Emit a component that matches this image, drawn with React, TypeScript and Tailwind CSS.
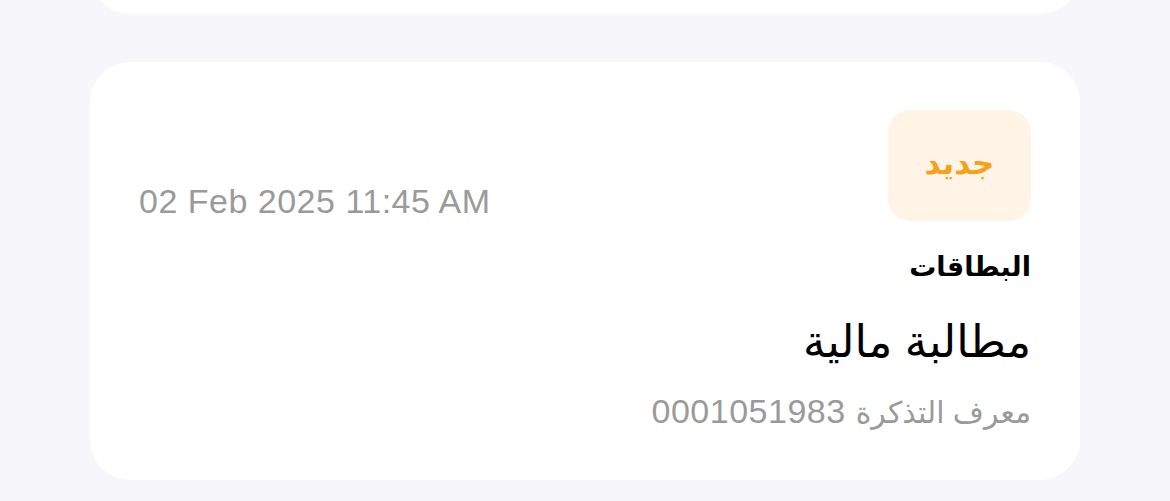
import React from 'react';

const ticket = {
  status: 'جديد',
  category: 'البطاقات',
  title: 'مطالبة مالية',
  idLabel: 'معرف التذكرة',
  id: '0001051983',
  date: '02 Feb 2025 11:45 AM',
};

export default function App() {
  return (
    <div className="min-h-[501px] overflow-hidden bg-[#f7f7fb] font-['Liberation_Sans','Noto_Sans','DejaVu_Sans',sans-serif]">
      {/* previous card, scrolled mostly off screen */}
      <div className="mx-[90px] -mt-[86px] h-[100px] rounded-[40px] bg-white" />

      <div dir="rtl" className="mx-[90px] mt-[48px] h-[418px] rounded-[40px] bg-white px-[49px] pt-[48px]">
        <div className="flex items-end justify-between">
          <div className="flex h-[111px] w-[143px] items-center justify-center rounded-[22px] bg-[#fff4e6] pb-[2px] text-[31px] font-semibold text-[#f5a11c]">
            {ticket.status}
          </div>
          <div dir="ltr" className="text-[34px] leading-[39px] tracking-[0.5px] text-[#9a9a9a]">
            {ticket.date}
          </div>
        </div>

        <div className="mt-[26px] text-[27px] font-bold leading-[40px] text-black">{ticket.category}</div>
        <div className="mt-[27px] text-[45px] leading-[56px] text-black">{ticket.title}</div>
        <div className="mt-[19px] flex items-baseline leading-[44px] text-[#9a9a9a]">
          <span className="text-[30px]">{ticket.idLabel}</span>
          <span className="ms-[10px] text-[34px] tracking-[0.5px]">{ticket.id}</span>
        </div>
      </div>
    </div>
  );
}
